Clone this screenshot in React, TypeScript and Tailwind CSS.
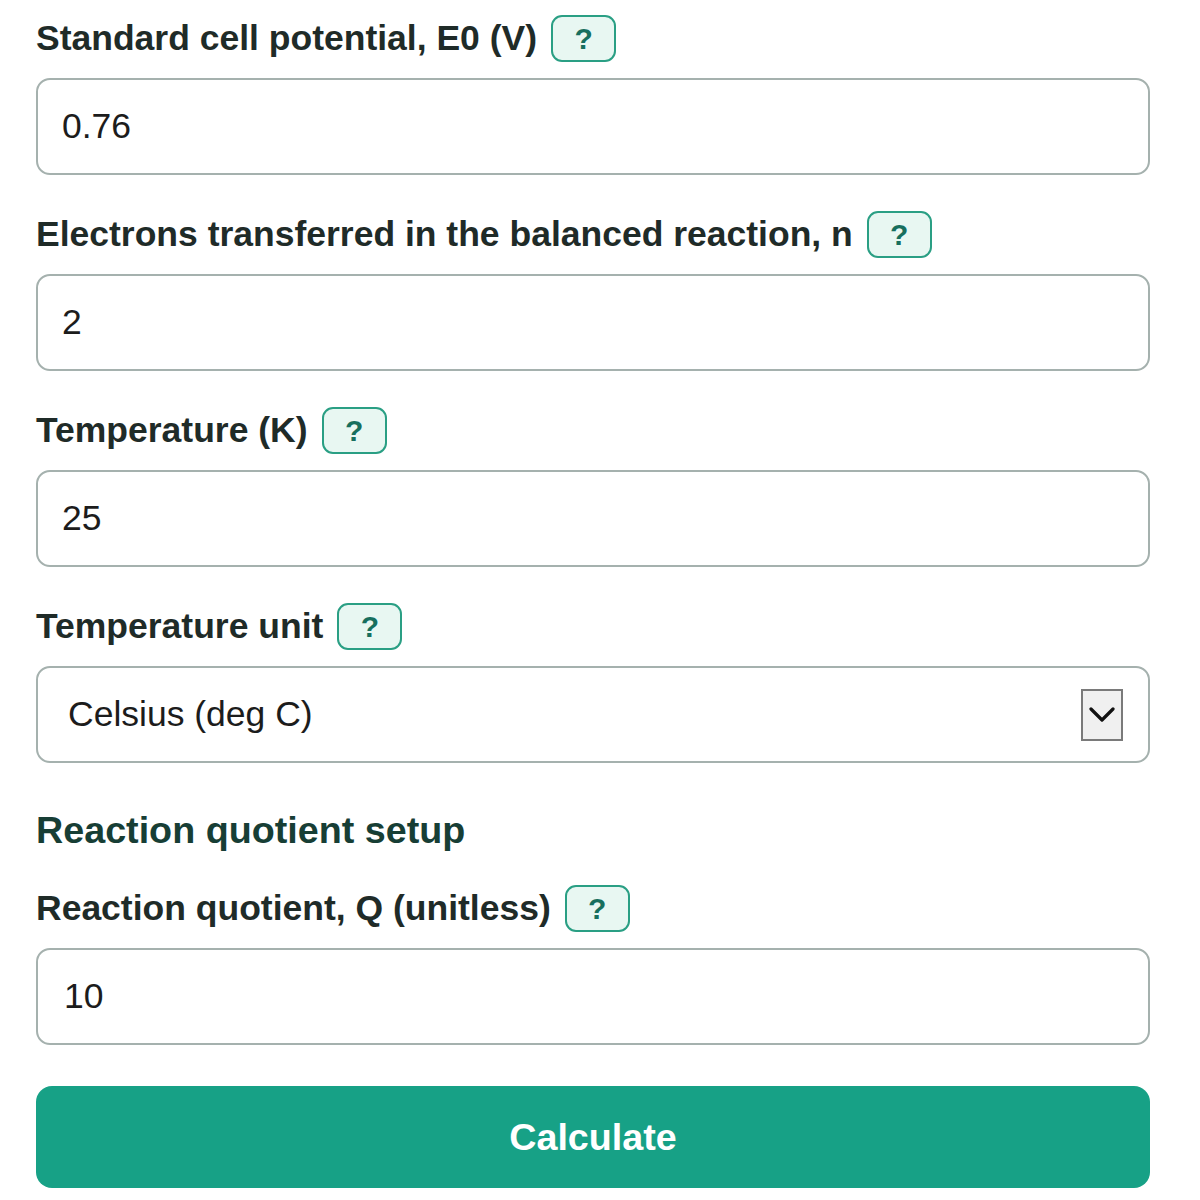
import React, { useState } from 'react';

const HelpButton = () => (
  <button
    type="button"
    className="ml-[14px] flex h-[47px] w-[65px] items-center justify-center rounded-[11px] border-2 border-[#2a9f84] bg-[#e8f7f2] text-[30px] font-bold leading-none text-[#176f5e]"
  >
    ?
  </button>
);

const Field = ({ label, value }: { label: string; value: string }) => (
  <div className="mb-[36px]">
    <div className="mb-[16px] flex h-[47px] items-center">
      <span className="text-[35.5px] font-bold text-[#1f2b28]">{label}</span>
      <HelpButton />
    </div>
    <input
      defaultValue={value}
      className="block h-[97px] w-full rounded-[14px] border-2 border-[#a5b1ae] bg-white px-[24px] text-[35.5px] text-[#1c1c1c] outline-none"
    />
  </div>
);

export default function App() {
  const [unit] = useState('Celsius (deg C)');

  return (
    <div className="min-h-[1200px] bg-white px-[36px] pt-[15px] font-['Liberation_Sans',Arial,sans-serif]">
      <div className="w-[1114px]">
        <Field label="Standard cell potential, E0 (V)" value="0.76" />
        <Field label="Electrons transferred in the balanced reaction, n" value="2" />
        <Field label="Temperature (K)" value="25" />

        <div className="mb-[45px]">
          <div className="mb-[16px] flex h-[47px] items-center">
            <span className="text-[35.5px] font-bold text-[#1f2b28]">Temperature unit</span>
            <HelpButton />
          </div>
          <div className="flex h-[97px] w-full items-center justify-between rounded-[14px] border-2 border-[#a5b1ae] bg-white pl-[30px] pr-[25px]">
            <span className="text-[35.5px] text-[#1c1c1c]">{unit}</span>
            <div className="flex h-[52px] w-[42px] items-center justify-center border-2 border-[#7a7a7a] bg-[#f0f0f0]">
              <svg width="26" height="16" viewBox="0 0 26 16" fill="none">
                <path d="M2 2 L13 13 L24 2" stroke="#111" strokeWidth="3.2" strokeLinecap="round" strokeLinejoin="round" />
              </svg>
            </div>
          </div>
        </div>

        <h2 className="mb-[33px] text-[37.7px] font-bold leading-[44px] text-[#173e35]">Reaction quotient setup</h2>

        <div className="mb-[41px]">
          <div className="mb-[16px] flex h-[47px] items-center">
            <span className="text-[35.5px] font-bold text-[#1f2b28]">Reaction quotient, Q (unitless)</span>
            <HelpButton />
          </div>
          <input
            defaultValue="10"
            className="block h-[97px] w-full rounded-[14px] border-2 border-[#a5b1ae] bg-white px-[26px] text-[35.5px] text-[#1c1c1c] outline-none"
          />
        </div>

        <button
          type="button"
          className="flex h-[102px] w-full items-center justify-center rounded-[16px] bg-[#17a186] text-[37.7px] font-bold text-white"
        >
          Calculate
        </button>
      </div>
    </div>
  );
}
